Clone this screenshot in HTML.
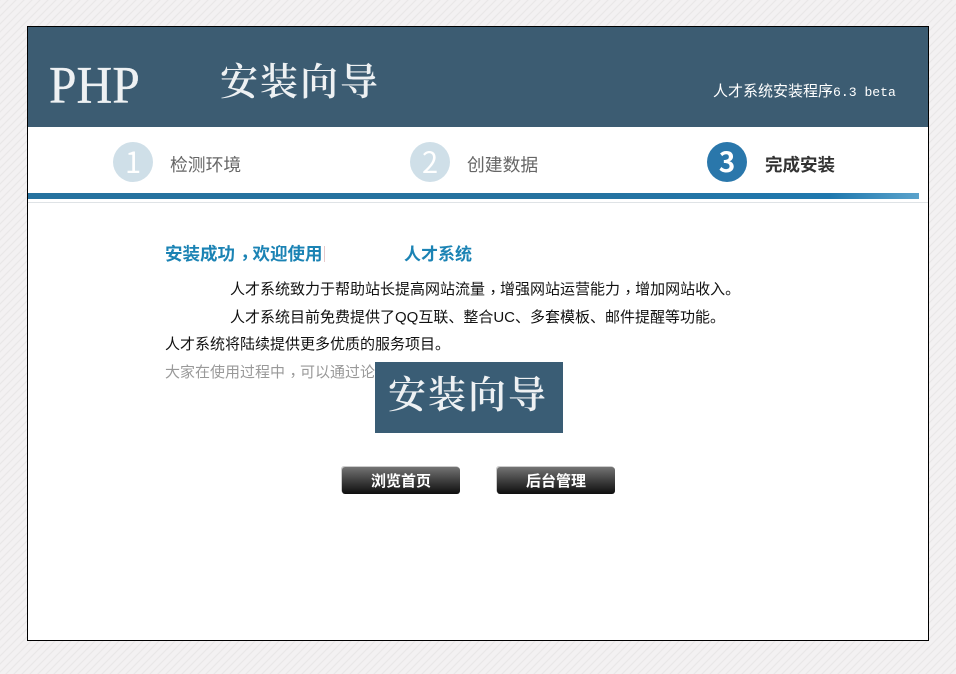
<!DOCTYPE html>
<html lang="zh-CN">
<head>
<meta charset="utf-8">
<title>安装向导</title>
<style>
html,body{margin:0;padding:0;width:956px;height:674px;overflow:hidden}
body{position:relative;font-family:"Liberation Sans","Noto Sans CJK SC",sans-serif;background:#f3f1f2}
.a{position:absolute;white-space:nowrap;line-height:1}
#bg{position:absolute;left:0;top:0}
#frame{position:absolute;left:27px;top:26px;width:900px;height:613px;border:1px solid #000;background:#fff}
#head{position:absolute;left:28px;top:27px;width:900px;height:100px;background:#3c5c72}
.logo{font-family:"Noto Serif CJK SC",serif;color:#eef1f3;font-weight:600;letter-spacing:2px}
.c{position:absolute;width:40px;height:40px;border-radius:50%;text-align:center;line-height:39px;color:#fff;font-size:29px;font-family:"Noto Sans CJK SC",sans-serif}
.c1{background:#cfdfe8}
.c3{background:#2a77ab;font-weight:bold;font-size:28px}
.s{font-size:17.8px;color:#666}
.h{font-size:17.5px;font-weight:bold;color:#1b83b4}
.t{font-size:15px;color:#111}
.p{display:inline-block;transform:translate(.3em,-.08em)}
.b{position:absolute;top:467px;width:118px;height:27px;border-radius:3px;background:linear-gradient(#747474,#3f3f3f 50%,#0e0e0e);text-align:center;color:#fff;font-weight:bold;font-size:15px;line-height:30px;box-shadow:-1px -1px 0 #ccc}
</style>
</head>
<body>
<svg id="bg" width="956" height="674">
<defs><pattern id="st" patternUnits="userSpaceOnUse" width="8" height="8"><path d="M-2 2L2 -2M0 8L8 0M6 10L10 6" stroke="#e9e7e8" stroke-width="1.2" fill="none"/></pattern></defs>
<rect width="956" height="674" fill="url(#st)"/>
</svg>
<div id="frame"></div>
<div id="head"></div>
<div class="a" style="left:49px;top:59px;font-family:'Liberation Serif',serif;font-size:49.5px;color:#eef1f3;transform-origin:left top;transform:scaleY(1.06);-webkit-text-stroke:.3px #eef1f3">PHP</div>
<div class="a logo" style="left:220px;top:60px;font-size:38px">安装向导</div>
<div class="a" style="left:713px;top:84px;font-size:15px;color:#fff;font-family:'Liberation Sans','WenQuanYi Zen Hei',sans-serif">人才系统安装程序<span style="font-family:'Liberation Mono',monospace;font-size:13.1px">6.3 beta</span></div>

<div class="c c1" style="left:113px;top:142px">1</div>
<div class="a s" style="left:170px;top:157px">检测环境</div>
<div class="c c1" style="left:410px;top:142px">2</div>
<div class="a s" style="left:467px;top:157px">创建数据</div>
<div class="c c3" style="left:707px;top:142px">3</div>
<div class="a" style="left:765px;top:157px;font-size:17.5px;font-weight:bold;color:#333">完成安装</div>

<div class="a" style="left:28px;top:193px;width:891px;height:6px;background:linear-gradient(90deg,#26729f 0,#26729f 60%,#1f78ae 90%,#5ba3cc 100%)"></div>
<div class="a" style="left:28px;top:202px;width:900px;height:1px;background:#dfe3e6"></div>

<div class="a h" style="left:165px;top:246px">安装成功<span class="p">，</span>欢迎使用</div>
<div class="a" style="left:324px;top:246px;width:1px;height:16px;background:#e6c9cc"></div>
<div class="a h" style="left:404px;top:246px;font-size:17px">人才系统</div>
<div class="a t" style="left:230px;top:282px">人才系统致力于帮助站长提高网站流量<span class="p">，</span>增强网站运营能力<span class="p">，</span>增加网站收入。</div>
<div class="a t" style="left:230px;top:310px">人才系统目前免费提供了QQ互联、整合UC、多套模板、邮件提醒等功能。</div>
<div class="a t" style="left:165px;top:337px">人才系统将陆续提供更多优质的服务项目。</div>
<div class="a t" style="left:165px;top:365px;color:#999">大家在使用过程中<span class="p">，</span>可以通过论</div>

<div class="a" style="left:375px;top:362px;width:188px;height:71px;background:#3a5d75"></div>
<div class="a logo" style="left:388px;top:373px;font-size:38px">安装向导</div>

<div class="b" style="left:342px">浏览首页</div>
<div class="b" style="left:497px">后台管理</div>
</body>
</html>
